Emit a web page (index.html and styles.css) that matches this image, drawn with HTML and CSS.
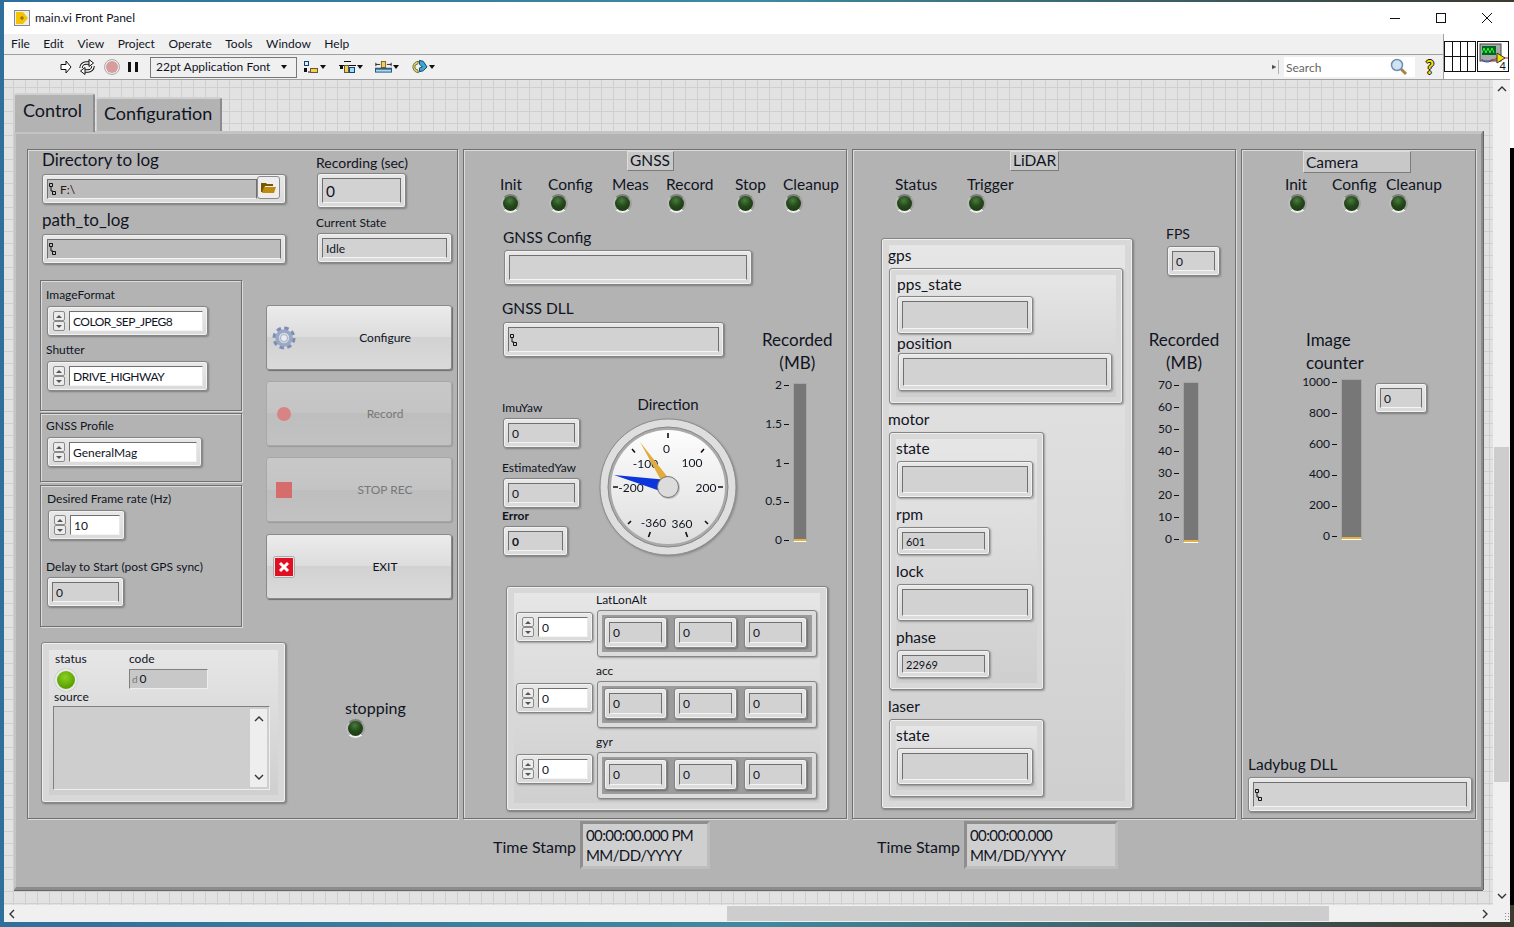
FILE: index.html
```html
<!DOCTYPE html>
<html lang="en">
<head>
    <meta charset="UTF-8">
    <title>main.vi Front Panel</title>
    <link rel="stylesheet" href="styles.css">
</head>
<body>
<div class="window">
    <div class="titlebar">
        <svg class="vi-icon" width="16" height="16" viewBox="0 0 16 16"><rect x="0.5" y="0.5" width="15" height="15" fill="#eee" stroke="#888"/><path d="M2 2h7l5 6-5 6H2z" fill="#f5c400"/><path d="M6 8h4M8 6v4" stroke="#806000"/></svg>
        <span class="title-text">main.vi Front Panel</span>
        <div class="win-btns">
            <svg width="10" height="10" viewBox="0 0 10 10"><path d="M0 5.5h10" stroke="#111"/></svg>
            <svg width="10" height="10" viewBox="0 0 10 10"><rect x="0.5" y="0.5" width="9" height="9" fill="none" stroke="#111"/></svg>
            <svg width="10" height="10" viewBox="0 0 10 10"><path d="M0 0l10 10M10 0L0 10" stroke="#111"/></svg>
        </div>
    </div>
    <div class="bars">
        <div class="bars-left">
            <div class="menu">
                <span>File</span><span>Edit</span><span>View</span><span>Project</span><span>Operate</span><span>Tools</span><span>Window</span><span>Help</span>
            </div>
            <div class="toolbar">
                <svg class="tb-run" width="12" height="14" viewBox="0 0 12 14"><path d="M1 4.5h5V1l5 6-5 6V9.500H1z" fill="#fff" stroke="#111"/></svg>
                <svg class="tb-cont" width="16" height="16" viewBox="0 0 16 16"><g fill="none"><path d="M2 9a5 5 0 0 1 5-5h3" stroke="#111" stroke-width="3.500"/><path d="M2 9a5 5 0 0 1 5-5h3" stroke="#fff" stroke-width="1.500"/><path d="M14 7a5 5 0 0 1-5 5H6" stroke="#111" stroke-width="3.500"/><path d="M14 7a5 5 0 0 1-5 5H6" stroke="#fff" stroke-width="1.500"/></g><path d="M10 .5L14.500 4 10 7.500zM6 8.500L1.500 12 6 15.500z" fill="#fff" stroke="#111"/></svg>
                <svg class="tb-stop" width="16" height="16" viewBox="0 0 16 16"><circle cx="8" cy="8" r="7.500" fill="#eee" stroke="#aaa"/><circle cx="8" cy="8" r="6" fill="#d89c9c"/></svg>
                <svg class="tb-pause" width="10" height="10" viewBox="0 0 10 10"><path d="M0 0h3v10H0zM7 0h3v10H7z" fill="#111"/></svg>
                <div class="fontbox"><span>22pt Application Font</span><i class="caret"></i></div>
                <div class="tb-tool tb-first">
                    <svg width="16" height="14" viewBox="0 0 16 14"><rect x="1.500" y="1.500" width="4" height="4" fill="#d8f0fa" stroke="#147"/><rect x="1" y="8" width="3" height="4" fill="#111"/><path d="M5 12h2" stroke="#111"/><rect x="7.500" y="8.500" width="7" height="4" fill="#f5d040" stroke="#654"/></svg><i class="caret"></i>
                </div>
                <div class="tb-tool">
                    <svg width="17" height="14" viewBox="0 0 17 14"><path d="M0 5.500h17M5 1.500h7" stroke="#111"/><rect x="5.500" y="5.500" width="4" height="7" fill="#f5d040" stroke="#654"/><rect x="10.500" y="7.500" width="5" height="5" fill="#9fdcf5" stroke="#147"/><rect x="1" y="6" width="3" height="3" fill="#111"/></svg><i class="caret"></i>
                </div>
                <div class="tb-tool">
                    <svg width="20" height="14" viewBox="0 0 20 14"><rect x="7.500" y="0.500" width="5" height="7" fill="#f5d040" stroke="#654"/><path d="M1 4h5M14 4h5M1 2v4M19 2v4M0 8.500h20" stroke="#111"/><rect x="0.500" y="9.500" width="19" height="3.500" fill="#9fdcf5" stroke="#147"/></svg><i class="caret"></i>
                </div>
                <div class="tb-tool tb-last">
                    <svg width="18" height="16" viewBox="0 0 18 16"><path d="M8 2a6 6 0 1 0 0 12l-1-3a3 3 0 0 1 0-6z" fill="#e8e040" stroke="#665"/><path d="M9 1l4 1 4 6-4 4-4 1V9l3-1-3-3z" fill="#3fa8d0" stroke="#146"/></svg><i class="caret"></i>
                </div>
                <div class="tb-right">
                    <svg class="tb-mark" width="8" height="14" viewBox="0 0 8 14"><path d="M0 5l4 2-4 2zM6.500 0v14" fill="#333" stroke="#888" stroke-width="0.600"/></svg>
                    <div class="searchbox">
                        <span>Search</span>
                        <svg width="18" height="18" viewBox="0 0 18 18"><path d="M10 10l6 6" stroke="#b08040" stroke-width="3"/><circle cx="7" cy="7" r="5.500" fill="#cfe3f5" stroke="#6f8fb0" stroke-width="1.500"/></svg>
                    </div>
                    <span class="help">?</span>
                </div>
            </div>
        </div>
        <div class="bars-right">
            <div class="conpane">
                <i></i><i></i><i></i><i></i><i></i><i></i><i></i><i></i>
            </div>
            <div class="vi-box">
                <svg width="32" height="30" viewBox="0 0 32 30"><rect x="2" y="2" width="21" height="17" fill="#aaa" stroke="#444"/><rect x="4" y="4" width="14" height="9" fill="#062"/><path d="M4 11l2-5 2 5 2-5 2 5 2-5 2 5" fill="none" stroke="#3f3"/><path d="M4 17a5 3 0 0 0 10 0" fill="none" stroke="#24c"/><path d="M12 19l8-3h10" stroke="#c22" fill="none"/><path d="M19 11l8 5-8 5z" fill="#f0e000" stroke="#333"/></svg>
                <span>4</span>
            </div>
        </div>
    </div>
    <div class="main">
        <div class="canvas">
            <div class="tabs">
                <div class="tab tab-on">Control</div>
                <div class="tab">Configuration</div>
            </div>
            <div class="tab-panel">
                <div class="panes">

                    <!-- left pane -->
                    <section class="pane pane-left">
                        <div class="left-row1">
                            <div class="left-a">
                                <label class="lb s17">Directory to log</label>
                                <div class="ctl w244 h30 mt4">
                                    <div class="fld fld-path">
                                        <svg class="pathico" width="8" height="12" viewBox="0 0 8 12"><path d="M.5.5h3v3h-3zM2 3.500V8h2M3.500 8.500h3v3h-3z" fill="none" stroke="#111"/></svg>
                                        <span class="s12">F:\</span>
                                    </div>
                                    <div class="browse">
                                        <svg width="15" height="11" viewBox="0 0 15 11"><path d="M0 1h5l1 1h6v2H4L2 10H0z" fill="#7a5600"/><path d="M3 5h12l-2 6H1z" fill="#c08c10"/></svg>
                                    </div>
                                </div>
                                <label class="lb s17 mt6">path_to_log</label>
                                <div class="ctl w244 h30 mt4">
                                    <div class="fld fld-path">
                                        <svg class="pathico" width="8" height="12" viewBox="0 0 8 12"><path d="M.5.5h3v3h-3zM2 3.500V8h2M3.500 8.500h3v3h-3z" fill="none" stroke="#111"/></svg>
                                    </div>
                                </div>
                            </div>
                            <div class="left-b">
                                <label class="lb s14 mt3">Recording (sec)</label>
                                <div class="ctl w89 h35 ml1"><div class="fld s16">0</div></div>
                                <label class="lb s12 mt5">Current State</label>
                                <div class="ctl w135 h30 ml1"><div class="fld s12">Idle</div></div>
                            </div>
                        </div>
                        <div class="left-row2">
                            <div class="subs">
                                <div class="sub sub1">
                                    <label class="lb s12">ImageFormat</label>
                                    <div class="ring w161 h30 mt1 ml1"><div class="spin"><b></b><b></b></div><div class="val s12 caps">COLOR_SEP_JPEG8</div></div>
                                    <label class="lb s12 mt4">Shutter</label>
                                    <div class="ring w161 h30 mt1 ml1"><div class="spin"><b></b><b></b></div><div class="val s12 caps">DRIVE_HIGHWAY</div></div>
                                </div>
                                <div class="sub sub2">
                                    <label class="lb s12">GNSS Profile</label>
                                    <div class="ring w155 h30 mt1 ml1"><div class="spin"><b></b><b></b></div><div class="val s12">GeneralMag</div></div>
                                </div>
                                <div class="sub sub3">
                                    <label class="lb s12 ml1">Desired Frame rate (Hz)</label>
                                    <div class="ring w77 h30 mt1 ml2"><div class="spin"><b></b><b></b></div><div class="val s12">10</div></div>
                                    <label class="lb s12 mt17">Delay to Start (post GPS sync)</label>
                                    <div class="ctl w77 h30 ml1"><div class="fld s12">0</div></div>
                                </div>
                            </div>
                            <div class="btns">
                                <div class="btn">
                                    <span class="btn-icon">
                                        <svg width="24" height="24" viewBox="0 0 24 24"><circle cx="12" cy="12" r="9.500" fill="none" stroke="#7d8db4" stroke-width="4" stroke-dasharray="4.200 3.260"/><circle cx="12" cy="12" r="7" fill="none" stroke="#9aa8c8" stroke-width="3.500"/><circle cx="12" cy="12" r="3.500" fill="#e8ebf2" stroke="#7d8db4" stroke-width="0.600"/></svg>
                                    </span>
                                    <span class="btn-text">Configure</span>
                                </div>
                                <div class="btn btn-off">
                                    <span class="btn-icon">
                                        <svg width="24" height="24" viewBox="0 0 24 24"><circle cx="12" cy="12" r="7" fill="#d98484"/></svg>
                                    </span>
                                    <span class="btn-text">Record</span>
                                </div>
                                <div class="btn btn-off">
                                    <span class="btn-icon">
                                        <svg width="24" height="24" viewBox="0 0 24 24"><rect x="4" y="4" width="16" height="16" fill="#d66c6c"/></svg>
                                    </span>
                                    <span class="btn-text">STOP REC</span>
                                </div>
                                <div class="btn">
                                    <span class="btn-icon">
                                        <svg width="24" height="24" viewBox="0 0 24 24"><rect x="1.500" y="1.500" width="21" height="21" rx="2" fill="#e8e8e8" stroke="#aaa"/><rect x="3" y="3" width="18" height="18" fill="#e01022"/><path d="M8 8l8 8M16 8l-8 8" stroke="#fff" stroke-width="3"/></svg>
                                    </span>
                                    <span class="btn-text">EXIT</span>
                                </div>
                            </div>
                        </div>
                        <div class="left-row3">
                            <div class="cluster err">
                                <div class="cluster-in err-in">
                                    <div class="err-top">
                                        <div class="err-status">
                                            <label class="lb16 s12">status</label>
                                            <div class="led-ok"></div>
                                        </div>
                                        <div>
                                            <label class="lb16 s12">code</label>
                                            <div class="err-code"><i>d</i>0</div>
                                        </div>
                                    </div>
                                    <label class="lb16 s12 err-src">source</label>
                                    <div class="err-box">
                                        <div class="err-scroll">
                                            <svg width="10" height="7" viewBox="0 0 10 7"><path d="M1 6l4-4 4 4" fill="none" stroke="#333" stroke-width="1.400"/></svg>
                                            <svg width="10" height="7" viewBox="0 0 10 7"><path d="M1 1l4 4 4-4" fill="none" stroke="#333" stroke-width="1.400"/></svg>
                                        </div>
                                    </div>
                                </div>
                            </div>
                            <div class="stopping">
                                <label class="lb s16 stop-lb">stopping</label>
                                <div class="led"></div>
                            </div>
                        </div>
                    </section>

                    <!-- gnss pane -->
                    <section class="pane pane-gnss">
                        <div class="pane-title gnss-title">GNSS</div>
                        <div class="leds leds-gnss">
                            <div class="led-item"><label class="lb s16">Init</label><div class="led"></div></div>
                            <div class="led-item"><label class="lb s16">Config</label><div class="led"></div></div>
                            <div class="led-item"><label class="lb s16">Meas</label><div class="led"></div></div>
                            <div class="led-item"><label class="lb s16">Record</label><div class="led"></div></div>
                            <div class="led-item"><label class="lb s16">Stop</label><div class="led"></div></div>
                            <div class="led-item"><label class="lb s16">Cleanup</label><div class="led"></div></div>
                        </div>
                        <label class="lb s16 gnss-cfg-lb">GNSS Config</label>
                        <div class="ctl w248 h35 gnss-cfg"><div class="fld"></div></div>
                        <div class="gnss-mid">
                            <div class="gnss-mid-left">
                                <label class="lb s16">GNSS DLL</label>
                                <div class="ctl w221 h35 mt3 ml1">
                                    <div class="fld fld-dll">
                                        <svg class="pathico" width="8" height="12" viewBox="0 0 8 12"><path d="M.5.5h3v3h-3zM2 3.500V8h2M3.500 8.500h3v3h-3z" fill="none" stroke="#111"/></svg>
                                    </div>
                                </div>
                                <div class="gnss-yaw-row">
                                    <div class="gnss-yaw">
                                        <label class="lb s12">ImuYaw</label>
                                        <div class="ctl w77 h30 ml1"><div class="fld s12">0</div></div>
                                        <label class="lb s12 mt10">EstimatedYaw</label>
                                        <div class="ctl w77 h30 ml1"><div class="fld s12">0</div></div>
                                        <label class="lb18 s12 bold err-lb">Error</label>
                                        <div class="ctl w65 h30 ml1"><div class="fld s12 bold">0</div></div>
                                    </div>
                                    <div class="gauge-wrap">
                                        <label class="lb s16 gauge-lb">Direction</label>
                                        <svg class="gauge" width="138" height="138" viewBox="0 0 138 138">
                                            <defs>
                                                <linearGradient id="face" x1="0" y1="0" x2="0" y2="1"><stop offset="0" stop-color="#fdfdfd"/><stop offset="1" stop-color="#dedede"/></linearGradient>
                                            </defs>
                                            <circle cx="69" cy="69" r="68" fill="#dedede" stroke="#8a8a8a"/>
                                            <circle cx="69" cy="69" r="60" fill="#aaa" stroke="#888"/>
                                            <circle cx="69" cy="69" r="57" fill="url(#face)"/>
                                            <path d="M69 15v5M119 69h5M14 69h5M105 31l-3 3.500M33 31l3 3.500M109 106l-3-3M29 106l3-3M88.500 119l-1.800-5M49.500 119l1.800-5" stroke="#111" stroke-width="1.600"/>
                                            <g class="gauge-nums">
                                                <text x="67.500" y="30">0</text>
                                                <text x="93" y="44.500">100</text>
                                                <text x="46.500" y="45.500">-100</text>
                                                <text x="32" y="69">-200</text>
                                                <text x="107" y="69">200</text>
                                                <text x="54.500" y="104">-360</text>
                                                <text x="83" y="105">360</text>
                                            </g>
                                            <path d="M41 24l30 38-7 4z" fill="#e2ac3c"/>
                                            <path d="M15 57l54 5-2 13z" fill="#0a36dc"/>
                                            <circle cx="70" cy="70" r="11" fill="#888" opacity="0.400"/>
                                            <circle cx="69" cy="69" r="10.500" fill="#dcdcdc" stroke="#777"/>
                                        </svg>
                                    </div>
                                </div>
                            </div>
                            <div class="rec">
                                <div class="rec-lb s17">Recorded<br>(MB)</div>
                                <div class="slide slide-gnss">
                                    <div class="scale"><span>2</span><span>1.5</span><span>1</span><span>0.5</span><span>0</span></div>
                                    <div class="bar"></div>
                                </div>
                            </div>
                        </div>
                        <div class="cluster cluster-big arrays">
                            <div class="cluster-in">
                                <label class="arr-lb s12">LatLonAlt</label>
                                <div class="arr-row">
                                    <div class="ring w77 h30 arr-ring"><div class="spin"><b></b><b></b></div><div class="val s12">0</div></div>
                                    <div class="arr"><div class="arr-in">
                                        <div class="ctl cell"><div class="fld s12">0</div></div>
                                        <div class="ctl cell"><div class="fld s12">0</div></div>
                                        <div class="ctl cell"><div class="fld s12">0</div></div>
                                    </div></div>
                                </div>
                                <label class="arr-lb s12 mt7">acc</label>
                                <div class="arr-row">
                                    <div class="ring w77 h30 arr-ring"><div class="spin"><b></b><b></b></div><div class="val s12">0</div></div>
                                    <div class="arr"><div class="arr-in">
                                        <div class="ctl cell"><div class="fld s12">0</div></div>
                                        <div class="ctl cell"><div class="fld s12">0</div></div>
                                        <div class="ctl cell"><div class="fld s12">0</div></div>
                                    </div></div>
                                </div>
                                <label class="arr-lb s12 mt7">gyr</label>
                                <div class="arr-row">
                                    <div class="ring w77 h30 arr-ring"><div class="spin"><b></b><b></b></div><div class="val s12">0</div></div>
                                    <div class="arr"><div class="arr-in">
                                        <div class="ctl cell"><div class="fld s12">0</div></div>
                                        <div class="ctl cell"><div class="fld s12">0</div></div>
                                        <div class="ctl cell"><div class="fld s12">0</div></div>
                                    </div></div>
                                </div>
                            </div>
                        </div>
                    </section>

                    <!-- lidar pane -->
                    <section class="pane pane-lidar">
                        <div class="pane-title lidar-title">LiDAR</div>
                        <div class="leds leds-lidar">
                            <div class="led-item"><label class="lb s16">Status</label><div class="led"></div></div>
                            <div class="led-item"><label class="lb s16">Trigger</label><div class="led"></div></div>
                        </div>
                        <div class="lidar-row">
                            <div class="cluster cluster-big lidar-main">
                                <div class="cluster-in lidar-in">
                                    <label class="lb s16">gps</label>
                                    <div class="cluster gps-box"><div class="cluster-in">
                                        <label class="lb s16 ml1">pps_state</label>
                                        <div class="ctl w136 h38 ml1 mt1"><div class="fld"></div></div>
                                        <label class="lb18 s16 ml1">position</label>
                                        <div class="ctl w214 h38 ml2 mt1"><div class="fld"></div></div>
                                    </div></div>
                                    <label class="lb s16 mt6">motor</label>
                                    <div class="cluster motor-box mt2"><div class="cluster-in">
                                        <label class="lb s16">state</label>
                                        <div class="ctl w136 h37 ml1 mt2"><div class="fld"></div></div>
                                        <label class="lb s16 mt7">rpm</label>
                                        <div class="ctl w93 h28 ml1 mt2"><div class="fld s11">601</div></div>
                                        <label class="lb s16 mt7">lock</label>
                                        <div class="ctl w136 h37 ml1 mt2"><div class="fld"></div></div>
                                        <label class="lb s16 mt7">phase</label>
                                        <div class="ctl w93 h28 ml1 mt2"><div class="fld s11">22969</div></div>
                                    </div></div>
                                    <label class="lb s16 mt7">laser</label>
                                    <div class="cluster laser-box mt2"><div class="cluster-in">
                                        <label class="lb s16">state</label>
                                        <div class="ctl w136 h37 ml1 mt2"><div class="fld"></div></div>
                                    </div></div>
                                </div>
                            </div>
                            <div class="lidar-side">
                                <label class="lb s14 fps-lb">FPS</label>
                                <div class="ctl w53 h30 fps-ctl"><div class="fld s12">0</div></div>
                                <div class="rec-lb s17 lidar-rec">Recorded<br>(MB)</div>
                                <div class="slide slide-lidar">
                                    <div class="scale"><span>70</span><span>60</span><span>50</span><span>40</span><span>30</span><span>20</span><span>10</span><span>0</span></div>
                                    <div class="bar"></div>
                                </div>
                            </div>
                        </div>
                    </section>

                    <!-- camera pane -->
                    <section class="pane pane-cam">
                        <div class="pane-title cam-title">Camera</div>
                        <div class="leds leds-cam">
                            <div class="led-item"><label class="lb s16">Init</label><div class="led"></div></div>
                            <div class="led-item"><label class="lb s16">Config</label><div class="led"></div></div>
                            <div class="led-item"><label class="lb s16">Cleanup</label><div class="led"></div></div>
                        </div>
                        <div class="cam-row">
                            <div class="cam-col">
                                <div class="rec-lb rec-left s17">Image<br>counter</div>
                                <div class="slide slide-cam">
                                    <div class="scale"><span>1000</span><span>800</span><span>600</span><span>400</span><span>200</span><span>0</span></div>
                                    <div class="bar"></div>
                                </div>
                            </div>
                            <div class="ctl w52 h30 cam-count"><div class="fld s12">0</div></div>
                        </div>
                        <label class="lb s16 lady-lb">Ladybug DLL</label>
                        <div class="ctl w224 h35 lady-ctl mt2">
                            <div class="fld fld-dll">
                                <svg class="pathico" width="8" height="12" viewBox="0 0 8 12"><path d="M.5.5h3v3h-3zM2 3.500V8h2M3.500 8.500h3v3h-3z" fill="none" stroke="#111"/></svg>
                            </div>
                        </div>
                    </section>
                </div>

                <div class="stamps">
                    <div class="stamp">
                        <label class="stamp-lb">Time Stamp</label>
                        <div class="stamp-box w130">00:00:00.000 PM<br>MM/DD/YYYY</div>
                    </div>
                    <div class="stamp stamp2">
                        <label class="stamp-lb">Time Stamp</label>
                        <div class="stamp-box w154">00:00:00.000<br>MM/DD/YYYY</div>
                    </div>
                </div>
            </div>
        </div>
        <div class="vscroll">
            <svg width="10" height="7" viewBox="0 0 10 7"><path d="M1 6l4-4 4 4" fill="none" stroke="#333" stroke-width="1.400"/></svg>
            <div class="vthumb"></div>
            <svg class="varrow-down" width="10" height="7" viewBox="0 0 10 7"><path d="M1 1l4 4 4-4" fill="none" stroke="#333" stroke-width="1.400"/></svg>
        </div>
    </div>
    <div class="hscroll">
        <svg width="7" height="10" viewBox="0 0 7 10"><path d="M6 1L2 5l4 4" fill="none" stroke="#333" stroke-width="1.400"/></svg>
        <div class="hthumb"></div>
        <svg class="harrow-right" width="7" height="10" viewBox="0 0 7 10"><path d="M1 1l4 4-4 4" fill="none" stroke="#333" stroke-width="1.400"/></svg>
        <div class="hgrip"></div>
    </div>
</div>
</body>
</html>
```
FILE: styles.css
```css
body {
    margin: 0;
    height: 927px;
    overflow: hidden;
    position: relative;
    font-family: Lato, "Noto Sans", sans-serif;
    color: #10141f;
    background: linear-gradient(90deg, #2f6f9c 0, #3d8aa0 50%, #3a3a30 100%);
}
body::after {
    content: "";
    position: absolute;
    top: 2px;
    right: 0;
    width: 4px;
    height: 903px;
    background: linear-gradient(#fff 146px, #000 146px);
}
.window {
    width: 1506px;
    margin: 2px 0 0 4px;
    background: #f0f0f0;
}

/* title bar */
.titlebar {
    height: 32px;
    background: #fff;
    display: flex;
    align-items: center;
    padding-left: 10px;
}
.title-text {
    font-size: 12px;
    margin-left: 5px;
    padding-bottom: 2px;
}
.win-btns {
    margin-left: auto;
    display: flex;
    gap: 36px;
    margin-right: 18px;
}

/* menu and toolbar */
.bars {
    display: flex;
    height: 45px;
    border-bottom: 1px solid #a0a0a0;
}
.bars-left {
    width: 1439px;
}
.menu {
    box-sizing: border-box;
    height: 21px;
    padding: 0 0 2px 7px;
    display: flex;
    align-items: center;
    font-size: 12px;
    gap: 13.5px;
    border-bottom: 1px solid #a0a0a0;
}
.toolbar {
    height: 24px;
    display: flex;
    align-items: center;
}
.tb-run { margin-left: 56px; }
.tb-cont { margin-left: 7px; }
.tb-stop { margin-left: 9px; }
.tb-pause { margin-left: 8px; }
.fontbox {
    box-sizing: border-box;
    width: 147px;
    height: 21px;
    margin-left: 12px;
    border: 1px solid #777;
    font-size: 12px;
    display: flex;
    align-items: center;
    padding: 0 9px 1px 5px;
    justify-content: space-between;
}
.caret {
    width: 0;
    height: 0;
    border: 3.5px solid transparent;
    border-top: 4px solid #111;
    border-bottom: 0;
}
.tb-tool {
    display: flex;
    align-items: center;
    gap: 1px;
    margin-left: 12px;
    width: 24px;
}
.tb-first { margin-left: 6px; }
.tb-right {
    margin-left: auto;
    padding-right: 2px;
    display: flex;
    align-items: center;
}
.tb-mark { margin-right: 4px; }
.searchbox {
    box-sizing: border-box;
    width: 131px;
    height: 20px;
    background: #fff;
    font-size: 12px;
    color: #666;
    display: flex;
    align-items: center;
    justify-content: space-between;
    padding: 0 7px 0 2px;
}
.help {
    width: 22px;
    margin-left: 4px;
    box-sizing: border-box;
    text-align: center;
    font-size: 18px;
    font-weight: bold;
    color: #f0e000;
    text-shadow: 1px 0 #111, -1px 0 #111, 0 1px #111, 0 -1px #111;
}
.bars-right {
    width: 66px;
    background: #fff;
    border-left: 1px solid #a0a0a0;
    display: flex;
    align-items: center;
    gap: 1px;
}
.conpane {
    box-sizing: border-box;
    width: 32px;
    height: 31px;
    border: 1px solid #111;
    display: grid;
    grid-template-columns: repeat(4, 1fr);
    grid-template-rows: repeat(2, 1fr);
    background: #111;
    gap: 1px;
}
.conpane i { background: #fff; }
.vi-box {
    box-sizing: border-box;
    width: 32px;
    height: 31px;
    border: 1px solid #111;
    position: relative;
    background: #fff;
}
.vi-box svg { display: block; }
.vi-box span {
    position: absolute;
    right: 2px;
    bottom: -1px;
    font-size: 11px;
}

/* canvas */
.main {
    display: flex;
}
.canvas {
    width: 1479px;
    height: 812px;
    padding: 13px 0 0 10px;
    background-color: #e2e2e2;
    background-image: linear-gradient(#cfcfcf 1px, transparent 1px), linear-gradient(90deg, #cfcfcf 1px, transparent 1px);
    background-size: 12px 12px;
    background-position: 9px 7px;
}
.tabs {
    display: flex;
    align-items: flex-end;
    height: 38px;
    font-size: 18px;
    position: relative;
    z-index: 1;
}
.tab {
    box-sizing: border-box;
    width: 126px;
    height: 34px;
    margin-left: 1px;
    padding: 3px 0 0 7px;
    background: #b3b3b3;
    border-top: 2px solid #d0d0d0;
    border-left: 1px solid #d0d0d0;
    border-right: 2px solid #8c8c8c;
    border-radius: 3px 3px 0 0;
}
.tab-on {
    width: 81px;
    height: 39px;
    margin: 0 0 -1px 0;
    padding: 4px 0 0 8px;
}
.tab-panel {
    box-sizing: border-box;
    width: 1469px;
    height: 759px;
    background: #b3b3b3;
    border-top: 3px solid #c4c4c4;
    border-left: 2px solid #c4c4c4;
    border-right: 2px solid #8c8c8c;
    border-bottom: 3px solid #8c8c8c;
    box-shadow: 0 1px #666, 1px 0 #666;
    padding: 15px 0 0 11px;
}
.panes {
    display: flex;
    gap: 5px;
}
.pane {
    box-sizing: border-box;
    height: 670px;
    border: 1px solid #707070;
    box-shadow: inset 1px 1px #dcdcdc, 1px 1px #dcdcdc;
}
.pane-left { width: 431px; }
.pane-gnss { width: 384px; }
.pane-lidar { width: 384px; }
.pane-cam { width: 235px; }

/* text sizes */
.s11 { font-size: 11px; }
.s12 { font-size: 12px; }
.s14 { font-size: 14px; }
.s16 { font-size: 15.5px; }
.s17 { font-size: 17px; }
.bold { font-weight: bold; }
.caps { letter-spacing: -0.5px; }
label { white-space: nowrap; }
.lb { display: block; height: 20px; line-height: 20px; }
.lb.s16 { line-height: 18px; }
.lb16 { display: block; height: 16px; line-height: 16px; }
.lb18 { display: block; height: 18px; line-height: 18px; }

/* spacing helpers */
.mt1 { margin-top: 1px; }
.mt2 { margin-top: 2px; }
.mt3 { margin-top: 3px; }
.mt4 { margin-top: 4px; }
.mt5 { margin-top: 5px; }
.mt6 { margin-top: 6px; }
.mt7 { margin-top: 7px; }
.mt8 { margin-top: 8px; }
.mt10 { margin-top: 10px; }
.mt17 { margin-top: 17px; }
.ml1 { margin-left: 1px; }
.ml2 { margin-left: 2px; }

/* control sizes */
.w52 { width: 52px; }
.w53 { width: 53px; }
.w65 { width: 65px; }
.w77 { width: 77px; }
.w89 { width: 89px; }
.w93 { width: 93px; }
.w130 { width: 130px; }
.w135 { width: 135px; }
.w136 { width: 136px; }
.w155 { width: 155px; }
.w154 { width: 154px; }
.w161 { width: 161px; }
.w214 { width: 214px; }
.w221 { width: 221px; }
.w224 { width: 224px; }
.w244 { width: 244px; }
.w248 { width: 248px; }
.h28 { height: 28px; }
.h30 { height: 30px; }
.h35 { height: 35px; }
.h37 { height: 37px; }
.h38 { height: 38px; }

/* numeric control */
.ctl {
    box-sizing: border-box;
    display: flex;
    padding: 4px;
    border: 1px solid #858585;
    border-radius: 3px;
    background: linear-gradient(#e8e8e8, #dadada);
    box-shadow: 1px 1px 2px rgba(0, 0, 0, 0.3), inset 0 0 0 1px #f2f2f2;
}
.fld {
    box-sizing: border-box;
    flex: 1;
    min-width: 0;
    display: flex;
    align-items: center;
    padding-left: 3px;
    background: #d2d2d2;
    border-top: 1px solid #707070;
    border-left: 1px solid #707070;
    border-right: 1px solid #707070;
    border-bottom: 1px solid #f4f4f4;
}
.fld-path {
    background: #bcbcbc;
    padding-left: 1px;
    color: #321010;
}
.fld-dll {
    padding-left: 1px;
}
.pathico { margin-right: 3px; flex: none; }
.browse {
    width: 23px;
    margin: -3px 1px 0 0;
    display: flex;
    align-items: center;
    justify-content: center;
    background: #eee;
    border: 1px solid #8a8a8a;
    border-radius: 3px;
    box-sizing: border-box;
}

/* ring with up and down buttons */
.ring {
    box-sizing: border-box;
    display: flex;
    gap: 4px;
    padding: 4px 4px 4px 5px;
    border: 1px solid #858585;
    border-radius: 3px;
    background: linear-gradient(#e8e8e8, #dadada);
    box-shadow: 1px 1px 2px rgba(0, 0, 0, 0.3), inset 0 0 0 1px #f2f2f2;
}
.spin {
    width: 12px;
    display: flex;
    flex-direction: column;
    flex: none;
}
.spin b {
    flex: 1;
    box-sizing: border-box;
    border: 1px solid #8a8a8a;
    border-radius: 2px;
    background: #ececec;
    display: flex;
    align-items: center;
    justify-content: center;
}
.spin b::after {
    content: "";
    border: 3px solid transparent;
    border-bottom: 3px solid #555;
    border-top: 0;
}
.spin b + b::after {
    border-top: 3px solid #555;
    border-bottom: 0;
}
.val {
    flex: 1;
    box-sizing: border-box;
    background: #fff;
    border-top: 1px solid #707070;
    border-left: 1px solid #707070;
    border-right: 1px solid #e8e8e8;
    border-bottom: 1px solid #f4f4f4;
    padding-left: 3px;
    display: flex;
    align-items: center;
}

/* left pane */
.left-row1 {
    display: flex;
    height: 114px;
}
.left-a {
    margin-left: 14px;
    width: 244px;
}
.left-b { margin-left: 30px; }
.left-row2 {
    display: flex;
    margin-top: 16px;
}
.subs {
    margin-left: 12px;
    width: 202px;
    display: flex;
    flex-direction: column;
}
.sub {
    box-sizing: border-box;
    border: 1px solid #707070;
    box-shadow: inset 1px 1px #dcdcdc, 1px 1px #dcdcdc;
    padding-left: 5px;
}
.sub1 { height: 131px; padding-top: 4px; }
.sub2 { height: 69px; margin-top: 2px; padding-top: 2px; }
.sub3 { height: 142px; margin-top: 3px; padding-top: 3px; }
.btns {
    margin: 25px 0 0 24px;
    width: 186px;
    display: flex;
    flex-direction: column;
    gap: 11px;
}
.btn {
    box-sizing: border-box;
    height: 65px;
    display: flex;
    align-items: center;
    font-size: 12px;
    border: 1px solid #8a8a8a;
    border-radius: 3px;
    box-shadow: 1px 1px 1px rgba(0, 0, 0, 0.4);
    background: linear-gradient(#ececec, #dcdcdc 50%, #d2d2d2 50%, #dadada);
}
.btn:last-child { margin-top: 1px; }
.btn-icon {
    flex: none;
    width: 36px;
    padding-left: 5px;
    box-sizing: border-box;
    display: flex;
}
.btn-text {
    flex: none;
    width: 164px;
    text-align: center;
}
.btn-off {
    background: linear-gradient(#c8c8c8, #c4c4c4 50%, #bebebe 50%, #c2c2c2);
    border-color: #a8a8a8;
    color: #777;
    box-shadow: 1px 1px 1px rgba(0, 0, 0, 0.15);
}
.left-row3 {
    display: flex;
    margin-top: 15px;
}
.cluster {
    box-sizing: border-box;
    padding: 6px;
    border: 1px solid #858585;
    border-radius: 3px;
    background: #d8d8d8;
    box-shadow: 1px 1px 2px rgba(0, 0, 0, 0.3), inset 0 0 0 1px #efefef;
}
.cluster-big { padding: 6px 7px 7px; }
.cluster-in {
    height: 100%;
    background: linear-gradient(#e6e6e6, #cfcfcf);
}
.err {
    margin-left: 13px;
    width: 245px;
    height: 161px;
    padding: 7px;
}
.err-in { box-sizing: border-box; padding: 1px 0 0 6px; }
.err-top { display: flex; }
.err-status { width: 74px; }
.led-ok {
    box-sizing: border-box;
    width: 22px;
    height: 22px;
    margin-top: 2px;
    border-radius: 50%;
    border: 2px solid #e8e8e8;
    box-shadow: 0 0 1px #777;
    background: radial-gradient(circle at 45% 35%, #8ed020, #58a000 70%);
}
.err-code {
    box-sizing: border-box;
    width: 79px;
    height: 20px;
    margin-top: 2px;
    padding-left: 2px;
    font-size: 12px;
    line-height: 18px;
    background: #c8c8c8;
    border: 1px solid #808080;
    border-right-color: #eee;
    border-bottom-color: #eee;
}
.err-code i {
    color: #777;
    font-style: normal;
    font-size: 10px;
    margin-right: 2px;
}
.err-src { margin-left: -1px; margin-top: -2px; }
.err-box {
    box-sizing: border-box;
    width: 217px;
    height: 84px;
    margin: 1px 0 0 -2px;
    background: #cecece;
    border: 1px solid #808080;
    border-right-color: #eee;
    border-bottom-color: #eee;
    display: flex;
    justify-content: flex-end;
    padding: 2px;
}
.err-scroll {
    width: 17px;
    background: #eee;
    display: flex;
    flex-direction: column;
    justify-content: space-between;
    align-items: center;
    padding: 6px 0;
}
.stopping {
    margin: 57px 0 0 59px;
}
.stop-lb { font-size: 16px; }
.stopping .led { margin: 0 0 0 1px; }

/* led */
.led-item { flex: none; }
.led {
    box-sizing: border-box;
    width: 19px;
    height: 19px;
    margin-top: -1px;
    border-radius: 50%;
    border: 2px solid;
    border-color: #7e7e7e #a0a0a0 #efefef #bcbcbc;
    background: radial-gradient(circle at 45% 30%, #4a7a3e 0, #24481a 45%, #183410 100%);
}
.leds {
    display: flex;
    margin-top: 4px;
    height: 37px;
}
.leds-gnss { margin-left: 36px; }
.leds-gnss .led { margin-left: 1px; }
.leds-gnss .led-item:nth-child(1) { width: 48px; }
.leds-gnss .led-item:nth-child(2) { width: 64px; }
.leds-gnss .led-item:nth-child(3) { width: 54px; }
.leds-gnss .led-item:nth-child(4) { width: 69px; }
.leds-gnss .led-item:nth-child(5) { width: 48px; }
.leds-lidar { margin-left: 42px; }
.leds-lidar .led-item { width: 72px; }
.leds-cam { margin-left: 43px; }
.leds-cam .led-item:nth-child(1) { width: 47px; }
.leds-cam .led-item:nth-child(2) { width: 54px; }
.leds-cam .led-item:nth-child(1) .led { margin-left: 3px; }
.leds-cam .led-item:nth-child(2) .led { margin-left: 10px; }
.leds-cam .led-item:nth-child(3) .led { margin-left: 3px; }

/* pane titles */
.pane-title {
    box-sizing: border-box;
    margin-top: 1px;
    height: 20px;
    line-height: 17px;
    font-size: 15.5px;
    background: #c8c8c8;
    border-right: 1px solid #7c7c7c;
    border-bottom: 1px solid #7c7c7c;
    border-left: 1px solid #dcdcdc;
    border-top: 1px solid #dcdcdc;
    padding-left: 2px;
}
.gnss-title { margin-left: 163px; width: 47px; }
.lidar-title { margin-left: 157px; width: 49px; }
.cam-title { margin-left: 61px; width: 108px; height: 22px; line-height: 20px; margin-bottom: -2px; }

/* gnss pane */
.gnss-cfg-lb { margin: 16px 0 0 39px; }
.gnss-cfg { margin: 2px 0 0 40px; }
.gnss-mid {
    display: flex;
    margin: 14px 0 0 38px;
}
.gnss-mid-left { width: 260px; }
.gnss-yaw-row { display: flex; }
.gnss-yaw { width: 97px; margin-top: 41px; }
.err-lb { line-height: 16px; }
.gauge-wrap { margin-top: 38px; }
.gauge-lb { text-align: center; margin-bottom: 3px; width: 138px; font-size: 15px; }
.gauge { display: block; filter: drop-shadow(1px 1px 1px rgba(0, 0, 0, 0.25)); }
.gauge-nums text {
    font-size: 12px;
    fill: #10141f;
    text-anchor: middle;
    dominant-baseline: central;
}
.rec { margin-top: 29px; }
.rec-lb {
    line-height: 23px;
    text-align: center;
    padding-bottom: 1px;
}
.rec-left { text-align: left; }
.slide {
    display: flex;
    align-items: flex-start;
}
.slide .scale {
    display: flex;
    flex-direction: column;
    justify-content: space-between;
    align-items: flex-end;
    font-size: 12px;
    line-height: 14px;
    white-space: nowrap;
}
.scale span::after {
    content: "";
    display: inline-block;
    width: 5px;
    height: 1px;
    background: #111;
    margin-left: 2px;
    vertical-align: middle;
}
.bar {
    box-sizing: border-box;
    background: linear-gradient(0deg, #e8b040 2px, #777 2px);
    border: 1px solid #a6a6a6;
    border-bottom: 1px solid #fff;
}
.slide-gnss { margin-top: 3px; gap: 4px; }
.slide-gnss .scale { width: 27px; height: 169px; }
.slide-gnss .bar { width: 14px; height: 159px; margin-top: 5px; }
.slide-lidar { margin-top: 3px; gap: 4px; }
.slide-lidar .scale { width: 31px; height: 168px; }
.slide-lidar .bar { width: 16px; height: 161px; margin-top: 4px; }
.slide-cam { gap: 4px; }
.slide-cam .scale { width: 31px; height: 168px; }
.slide-cam .bar { width: 21px; height: 161px; margin-top: 4px; }

.arrays {
    margin: 30px 0 0 42px;
    width: 322px;
    height: 225px;
}
.arr-lb {
    display: block;
    margin-left: 82px;
    height: 14px;
    line-height: 14px;
}
.arr-row { display: flex; align-items: flex-start; margin-top: 3px; }
.arr-ring { margin: 2px 4px 0 2px; }
.arr {
    box-sizing: border-box;
    width: 220px;
    height: 47px;
    padding: 4px;
    border: 1px solid #858585;
    border-radius: 3px;
    background: #dcdcdc;
    box-shadow: 1px 1px 2px rgba(0, 0, 0, 0.3);
}
.arr-in {
    height: 100%;
    padding: 2px;
    box-sizing: border-box;
    background: #9c9c9c;
    display: flex;
    gap: 7px;
}
.cell { width: 63px; height: 31px; }

/* lidar pane */
.lidar-row { display: flex; }
.lidar-main {
    margin: 26px 0 0 28px;
    width: 252px;
    height: 571px;
}
.lidar-in { padding-top: 1px; box-sizing: border-box; }
.lidar-in > .lb { margin-left: -1px; }
.gps-box { margin-top: 2px; width: 234px; height: 136px; }
.motor-box { width: 155px; height: 258px; }
.laser-box { width: 155px; height: 78px; }
.lidar-side { margin: 12px 0 0 15px; }
.fps-lb { margin-left: 18px; }
.fps-ctl { margin: 2px 0 0 19px; }
.lidar-rec { margin-top: 52px; }

/* camera pane */
.cam-row { display: flex; margin: 116px 0 0 64px; }
.cam-col { width: 56px; }
.cam-count { margin: 55px 0 0 13px; }
.lady-lb { margin: 212px 0 0 6px; }
.lady-ctl { margin-left: 6px; }

/* time stamps */
.stamps {
    display: flex;
    margin: 2px 0 0 -11px;
    padding-left: 477px;
}
.stamp { display: flex; align-items: center; }
.stamp2 { margin-left: 167px; }
.stamp-lb { width: 87px; margin-top: 2px; font-size: 16px; }
.stamp-box {
    box-sizing: border-box;
    height: 48px;
    line-height: 20px;
    padding: 1px 0 0 3px;
    font-size: 15px;
    letter-spacing: -0.6px;
    white-space: nowrap;
    background: #cfcfcf;
    border: 3px solid;
    border-color: #8e8e8e #bdbdbd #bdbdbd #8e8e8e;
}

/* scrollbars */
.vscroll {
    width: 17px;
    height: 825px;
    background: #f0f0f0;
    box-sizing: border-box;
    padding-top: 5px;
    display: flex;
    flex-direction: column;
    align-items: center;
}
.vthumb {
    width: 15px;
    height: 335px;
    margin-top: 355px;
    background: #cdcdcd;
}
.varrow-down { margin-top: 111px; }
.hscroll {
    height: 17px;
    box-sizing: border-box;
    background: #f0f0f0;
    display: flex;
    align-items: center;
    padding-left: 4px;
}
.hthumb {
    width: 602px;
    height: 15px;
    margin-left: 712px;
    background: #cdcdcd;
}
.harrow-right { margin-left: 153px; }
.hgrip {
    width: 6px;
    height: 9px;
    margin: 6px 0 0 15px;
    background: radial-gradient(#8a8a8a 1px, transparent 1px) 0 0 / 3px 3px;
}
```
